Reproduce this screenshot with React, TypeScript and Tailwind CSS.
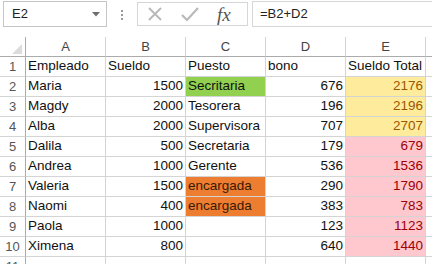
const rows: { n: number; a: string; b: string; c: string; cBg?: string; d: string; e: string; eKind?: "y" | "p" }[] = [
  { n: 2, a: "Maria", b: "1500", c: "Secritaria", cBg: "bg-[#92d050]", d: "676", e: "2176", eKind: "y" },
  { n: 3, a: "Magdy", b: "2000", c: "Tesorera", d: "196", e: "2196", eKind: "y" },
  { n: 4, a: "Alba", b: "2000", c: "Supervisora", d: "707", e: "2707", eKind: "y" },
  { n: 5, a: "Dalila", b: "500", c: "Secretaria", d: "179", e: "679", eKind: "p" },
  { n: 6, a: "Andrea", b: "1000", c: "Gerente", d: "536", e: "1536", eKind: "p" },
  { n: 7, a: "Valeria", b: "1500", c: "encargada", cBg: "bg-[#ed7d31]", d: "290", e: "1790", eKind: "p" },
  { n: 8, a: "Naomi", b: "400", c: "encargada", cBg: "bg-[#ed7d31]", d: "383", e: "783", eKind: "p" },
  { n: 9, a: "Paola", b: "1000", c: "", d: "123", e: "1123", eKind: "p" },
  { n: 10, a: "Ximena", b: "800", c: "", d: "640", e: "1440", eKind: "p" },
];

const cell = "h-[20px] border-r border-b border-[#d4d4d4] px-[2px] flex items-center overflow-visible whitespace-nowrap";
const hdr = "h-[20px] border-r border-b border-[#d4d4d4] border-b-[#ababab] flex items-center justify-center text-[#444] text-[13px]";
const rowHdr = "h-[20px] border-r border-b border-[#d4d4d4] border-r-[#ababab] flex items-center justify-center text-[#555] text-[13px]";

function TopBar() {
  return (
    <div className="flex h-[28px] items-stretch pt-[1px]">
      <div className="ml-[3px] w-[104px] h-[26px] border border-[#c6c6c6] flex items-center justify-between pl-[8px] pr-[6px] text-[13px] text-[#222]">
        <span>E2</span>
        <svg width="8" height="5" viewBox="0 0 8 5"><path d="M0 0h8L4 4.5z" fill="#6d6d6d" /></svg>
      </div>
      <div className="w-[30px] flex flex-col items-center justify-center gap-[2px]">
        <div className="w-[2px] h-[2px] bg-[#9a9a9a]" />
        <div className="w-[2px] h-[2px] bg-[#9a9a9a]" />
        <div className="w-[2px] h-[2px] bg-[#9a9a9a]" />
      </div>
      <div className="mt-[1px] w-[111px] h-[24px] border border-[#d6d6d6] flex items-center pl-[9px] gap-[18px]">
        <svg width="16" height="16" viewBox="0 0 16 16"><path d="M2 2L14 14M14 2L2 14" stroke="#b9b9b9" strokeWidth="2" /></svg>
        <svg width="18" height="15" viewBox="0 0 18 15"><path d="M1 8L6 13L17 1" stroke="#b9b9b9" strokeWidth="2.2" fill="none" /></svg>
        <span className="text-[#555] text-[19px] italic leading-none" style={{ fontFamily: '"Liberation Serif", serif' }}>fx</span>
      </div>
      <div className="w-[4px]" />
      <div className="flex-1 h-[26px] border border-[#d6d6d6] border-r-0 flex items-center pl-[7px] text-[13px] text-[#222]">=B2+D2</div>
    </div>
  );
}

export default function App() {
  return (
    <div className="w-[432px] h-[264px] overflow-hidden bg-white" style={{ fontFamily: '"Liberation Sans", Arial, sans-serif' }}>
      <TopBar />
      <div className="h-[9px]" />
      <div className="grid grid-cols-[26px_80px_80px_80px_80px_80px_80px] text-[13.5px] text-[#111]">
        <div className="h-[20px] border-r border-b border-r-[#ababab] border-b-[#ababab] flex items-end justify-end pr-[3px] pb-[2px]">
          <svg width="10" height="10" viewBox="0 0 10 10"><path d="M10 0V10H0z" fill="#dcdcdc" /></svg>
        </div>
        {["A", "B", "C", "D", "E", "F"].map((l) => (
          <div key={l} className={hdr}>{l === "F" ? "" : l}</div>
        ))}

        <div className={rowHdr}>1</div>
        <div className={cell}>Empleado</div>
        <div className={cell}>Sueldo</div>
        <div className={cell}>Puesto</div>
        <div className={cell}>bono</div>
        <div className={cell}>Sueldo Total</div>
        <div className={cell} />

        {rows.map((r) => (
          <div key={r.n} className="contents">
            <div className={rowHdr}>{r.n}</div>
            <div className={cell}>{r.a}</div>
            <div className={`${cell} justify-end`}>{r.b}</div>
            <div className={`${cell} ${r.cBg ?? ""} ${r.c === "encargada" ? "text-[#3a1a05]" : ""}`}>{r.c}</div>
            <div className={`${cell} justify-end`}>{r.d}</div>
            <div
              className={`${cell} justify-end ${
                r.eKind === "y" ? "bg-[#ffeb9c] text-[#9c5700]" : "bg-[#ffc7ce] text-[#9c0006]"
              }`}
            >
              {r.e}
            </div>
            <div className={cell} />
          </div>
        ))}

        <div className={rowHdr}>11</div>
        <div className={cell} />
        <div className={cell} />
        <div className={cell} />
        <div className={cell} />
        <div className={cell} />
        <div className={cell} />
      </div>
    </div>
  );
}
